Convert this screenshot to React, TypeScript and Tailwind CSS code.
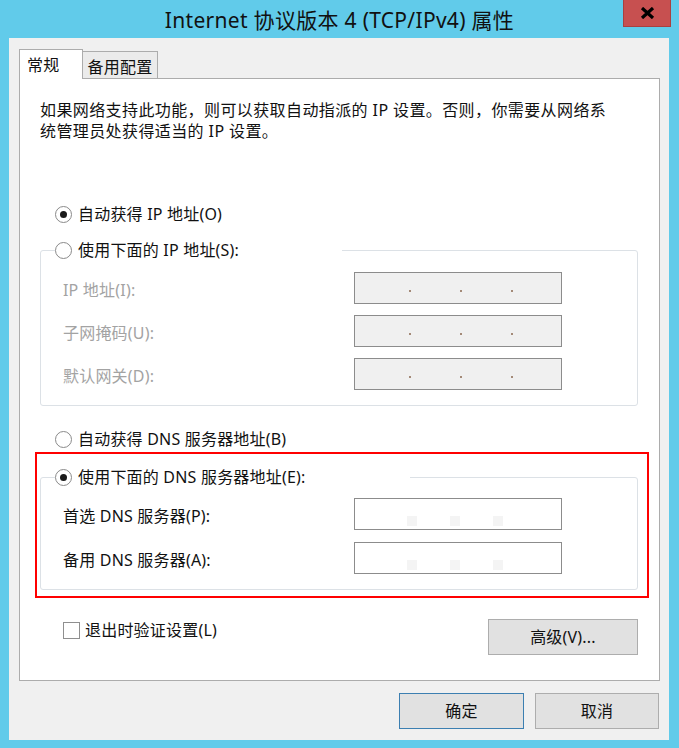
import React from "react";

const font = {
  fontFamily: '"Noto Sans", "Noto Sans CJK SC", sans-serif',
};

function Radio({ checked = false }: { checked?: boolean }) {
  return (
    <span className="flex h-[17px] w-[17px] shrink-0 items-center justify-center rounded-full border border-[#8a8a8a] bg-white">
      {checked && <span className="h-[7px] w-[7px] rounded-full bg-[#1a1a1a]" />}
    </span>
  );
}

function RadioRow({ label, checked }: { label: string; checked?: boolean }) {
  return (
    <div className="flex h-[20px] items-center gap-[6px]">
      <Radio checked={checked} />
      <span>{label}</span>
    </div>
  );
}

function IpBox() {
  return (
    <div className="flex h-[32px] w-[208px] items-start gap-[49px] border border-[#8c8c8c] bg-[#f0f0f0] pl-[54px] pt-[17px]">
      {[0, 1, 2].map((i) => (
        <span key={i} className="h-[2px] w-[2px] bg-[#a48a78]" />
      ))}
    </div>
  );
}

function DnsBox() {
  // address is blurred out in the picture, only faint blobs remain
  return (
    <div className="flex h-[32px] w-[208px] items-start gap-[33px] border border-[#8c8c8c] bg-white pl-[52px] pt-[17px]">
      {[0, 1, 2].map((i) => (
        <span key={i} className="h-[10px] w-[10px] bg-[#f4f4f4]" />
      ))}
    </div>
  );
}

function Button({ label, primary }: { label: string; primary?: boolean }) {
  return (
    <button
      className={
        "flex h-[36px] items-center justify-center border bg-[#e1e1e1] text-[16px] leading-[20px] text-[#111] " +
        (primary ? "w-[125px] border-[#3c7fb1]" : "w-[124px] border-[#adadad]")
      }
    >
      {label}
    </button>
  );
}

export default function App() {
  return (
    <div
      className="h-[748px] w-[679px] bg-[#61cbea] text-[16px] leading-[20px] tracking-[0.2px] text-[#111]"
      style={font}
    >
      {/* title bar */}
      <div className="grid h-[38px] grid-cols-[1fr_auto_1fr]">
        <div />
        <div className="self-center pt-[1px] text-[21px] leading-[26px] tracking-[0.3px] text-[#111]">
          Internet 协议版本 4 (TCP/IPv4) 属性
        </div>
        <div className="flex justify-end pr-[8px]">
          <div className="flex h-[27px] w-[48px] items-center justify-center border border-t-0 border-[#a94040] bg-[#c75050]">
            <svg width="15" height="12" viewBox="0 0 15 12">
              <path d="M2 1 L13 11 M13 1 L2 11" stroke="#000" strokeWidth="3.2" />
            </svg>
          </div>
        </div>
      </div>

      {/* client area */}
      <div className="ml-[9px] flex w-[660px] flex-col bg-[#f0f0f0] px-[10px] pb-[11px] pt-[11px]">
        <div className="flex items-end">
          <div className="relative z-10 -mb-px h-[30px] w-[64px] border border-b-0 border-[#acacac] bg-white pl-[7px] pt-[5px]">
            常规
          </div>
          <div className="h-[27px] w-[75px] border border-b-0 border-l-0 border-[#acacac] bg-[#ebebeb] pt-[5px] text-center">
            备用配置
          </div>
        </div>

        <div className="flex h-[603px] w-[641px] flex-col border border-[#acacac] bg-white">
          <p className="ml-[20px] mt-[21px] leading-[21px] tracking-[0.4px]">
            如果网络支持此功能，则可以获取自动指派的 IP 设置。否则，你需要从网络系
            <br />
            统管理员处获得适当的 IP 设置。
          </p>

          <div className="ml-[35px] mt-[62px]">
            <RadioRow label="自动获得 IP 地址(O)" checked />
          </div>

          <fieldset className="m-0 ml-[20px] mt-[16px] w-[598px] rounded-[3px] border border-[#dce1e6] p-0">
            <legend className="ml-[14px] w-[287px] bg-white p-0">
              <RadioRow label="使用下面的 IP 地址(S):" />
            </legend>
            <div className="mt-[12px] grid grid-cols-[291px_208px] gap-y-[11px] pb-[15px] pl-[22px] text-[#a3a3a3]">
              {["IP 地址(I):", "子网掩码(U):", "默认网关(D):"].map((label) => (
                <React.Fragment key={label}>
                  <div className="self-center pt-[3px]">{label}</div>
                  <IpBox />
                </React.Fragment>
              ))}
            </div>
          </fieldset>

          <div className="ml-[35px] mt-[23px]">
            <RadioRow label="自动获得 DNS 服务器地址(B)" />
          </div>

          <div className="ml-[15px] mt-[3px] w-[614px] border-2 border-[#ff0000] pb-[6px] pl-[3px] pt-[13px]">
            <fieldset className="m-0 w-[598px] rounded-[3px] border border-[#dce1e6] p-0">
              <legend className="ml-[14px] w-[355px] bg-white p-0">
                <RadioRow label="使用下面的 DNS 服务器地址(E):" checked />
              </legend>
              <div className="mt-[11px] grid grid-cols-[291px_208px] gap-y-[12px] pb-[15px] pl-[22px]">
                {["首选 DNS 服务器(P):", "备用 DNS 服务器(A):"].map((label) => (
                  <React.Fragment key={label}>
                    <div className="self-center pt-[3px]">{label}</div>
                    <DnsBox />
                  </React.Fragment>
                ))}
              </div>
            </fieldset>
          </div>

          <div className="ml-[43px] mr-[21px] mt-[21px] flex items-start justify-between">
            <div className="mt-px flex items-center gap-[5px]">
              <span className="h-[17px] w-[17px] border border-[#8f8f8f] bg-white" />
              <span>退出时验证设置(L)</span>
            </div>
            <button className="flex h-[36px] w-[150px] items-center justify-center border border-[#adadad] bg-[#e1e1e1]">
              高级(V)...
            </button>
          </div>
        </div>

        <div className="mt-[12px] flex justify-end gap-[11px]">
          <Button label="确定" primary />
          <Button label="取消" />
        </div>
      </div>
    </div>
  );
}
